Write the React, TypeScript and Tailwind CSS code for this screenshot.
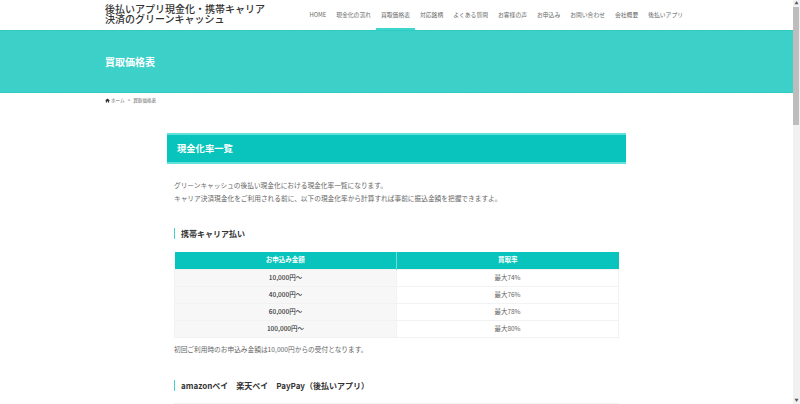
const jp = "font-['Noto_Sans_CJK_JP','Noto_Sans',sans-serif]";

const nav = [
  "HOME",
  "現金化の流れ",
  "買取価格表",
  "対応銘柄",
  "よくある質問",
  "お客様の声",
  "お申込み",
  "お問い合わせ",
  "会社概要",
  "後払いアプリ",
];

const rows = [
  ["10,000円〜", "最大74%"],
  ["40,000円〜", "最大76%"],
  ["60,000円〜", "最大78%"],
  ["100,000円〜", "最大80%"],
];

const SubHeading = ({ children }: { children: string }) => (
  <h3 className="border-l-[1.5px] border-[#3fd6ce] pl-[6px] text-[8px] leading-[11px] font-bold text-[#333]">
    {children}
  </h3>
);

export default function App() {
  return (
    <div className={`${jp} flex h-[404px] w-[800px] overflow-hidden bg-white`}>
      <div className="w-[793px] shrink-0">
        <header className="flex h-[30px] items-start justify-between pr-[105px] pl-[105px]">
          <div className="shrink-0 pt-[4px] text-[10px] leading-[10px] font-medium whitespace-nowrap text-[#333]">
            <div>後払いアプリ現金化・携帯キャリア</div>
            <div>決済のグリーンキャッシュ</div>
          </div>
          <nav className="flex">
            {nav.map((n) => (
              <a
                key={n}
                className={`h-[30px] border-b-[2px] px-[5px] pt-[10px] text-[5.8px] leading-[10px] whitespace-nowrap text-[#666] ${
                  n === "買取価格表" ? "border-[#3fd6ce]" : "border-transparent"
                }`}
              >
                {n}
              </a>
            ))}
          </nav>
        </header>

        <div className="flex h-[63px] items-center border-y border-[#2fcbc3] bg-[#3bd0c8] bg-[repeating-linear-gradient(135deg,#3bd0c8_0px,#3bd0c8_2px,#3ed1c9_2px,#3ed1c9_4px)] pl-[105px] text-[10px] font-bold text-white">
          買取価格表
        </div>

        <div className="flex h-[15px] items-center gap-[1px] pl-[105px] text-[4.6px] text-[#666]">
          <svg width="5" height="5" viewBox="0 0 12 10" fill="#333">
            <path d="M6 0 0 5h2v5h3V7h2v3h3V5h2z" />
          </svg>
          <span>ホーム</span>
          <span className="px-[2px]">&gt;</span>
          <span>買取価格表</span>
        </div>

        <main className="ml-[167px] w-[459px] pt-[25px]">
          <h2 className="flex h-[31px] items-center border-y-2 border-[#62e0da] bg-[#08c4bc] pl-[10px] text-[9.3px] font-bold text-white">
            現金化率一覧
          </h2>
          <p className="mt-[15px] pl-[7px] text-[6.7px] leading-[13px] text-[#666]">
            グリーンキャッシュの後払い現金化における現金化率一覧になります。
            <br />
            キャリア決済現金化をご利用される前に、以下の現金化率から計算すれば事前に振込金額を把握できますよ。
          </p>

          <div className="mt-[23px] pl-[7px]">
            <SubHeading>携帯キャリア払い</SubHeading>

            <table className="mt-[13px] w-[445px] table-fixed border-collapse text-center text-[6.5px]">
              <thead>
                <tr className="h-[17px] bg-[#08c4bc] text-white">
                  <th className="w-[222px] border-r border-[#6fdcd6] font-bold">お申込み金額</th>
                  <th className="font-bold">買取率</th>
                </tr>
              </thead>
              <tbody>
                {rows.map(([a, b]) => (
                  <tr key={a} className="h-[17px] border border-[#f2f2f2]">
                    <td className="border-r border-[#f2f2f2] bg-[#f7f7f7] font-medium text-[#333]">{a}</td>
                    <td className="text-[#666]">{b}</td>
                  </tr>
                ))}
              </tbody>
            </table>

            <p className="mt-[5px] text-[6.7px] leading-[13px] text-[#666]">
              初回ご利用時のお申込み金額は10,000円からの受付となります。
            </p>

            <div className="mt-[24px]">
              <SubHeading>amazonペイ　楽天ペイ　PayPay（後払いアプリ）</SubHeading>
            </div>
            <div className="mt-[12px] h-px w-[445px] bg-[#f2f2f2]" />
          </div>
        </main>
      </div>

      <aside className="flex w-[7px] shrink-0 flex-col bg-[#f1f1f1]">
        <div className="h-[7px] text-center text-[4px] leading-[7px] text-[#555]">▲</div>
        <div className="h-[118px] w-[6px] bg-[#bdbdbd]" />
        <div className="mt-auto h-[7px] text-center text-[4px] leading-[7px] text-[#555]">▼</div>
      </aside>
    </div>
  );
}
